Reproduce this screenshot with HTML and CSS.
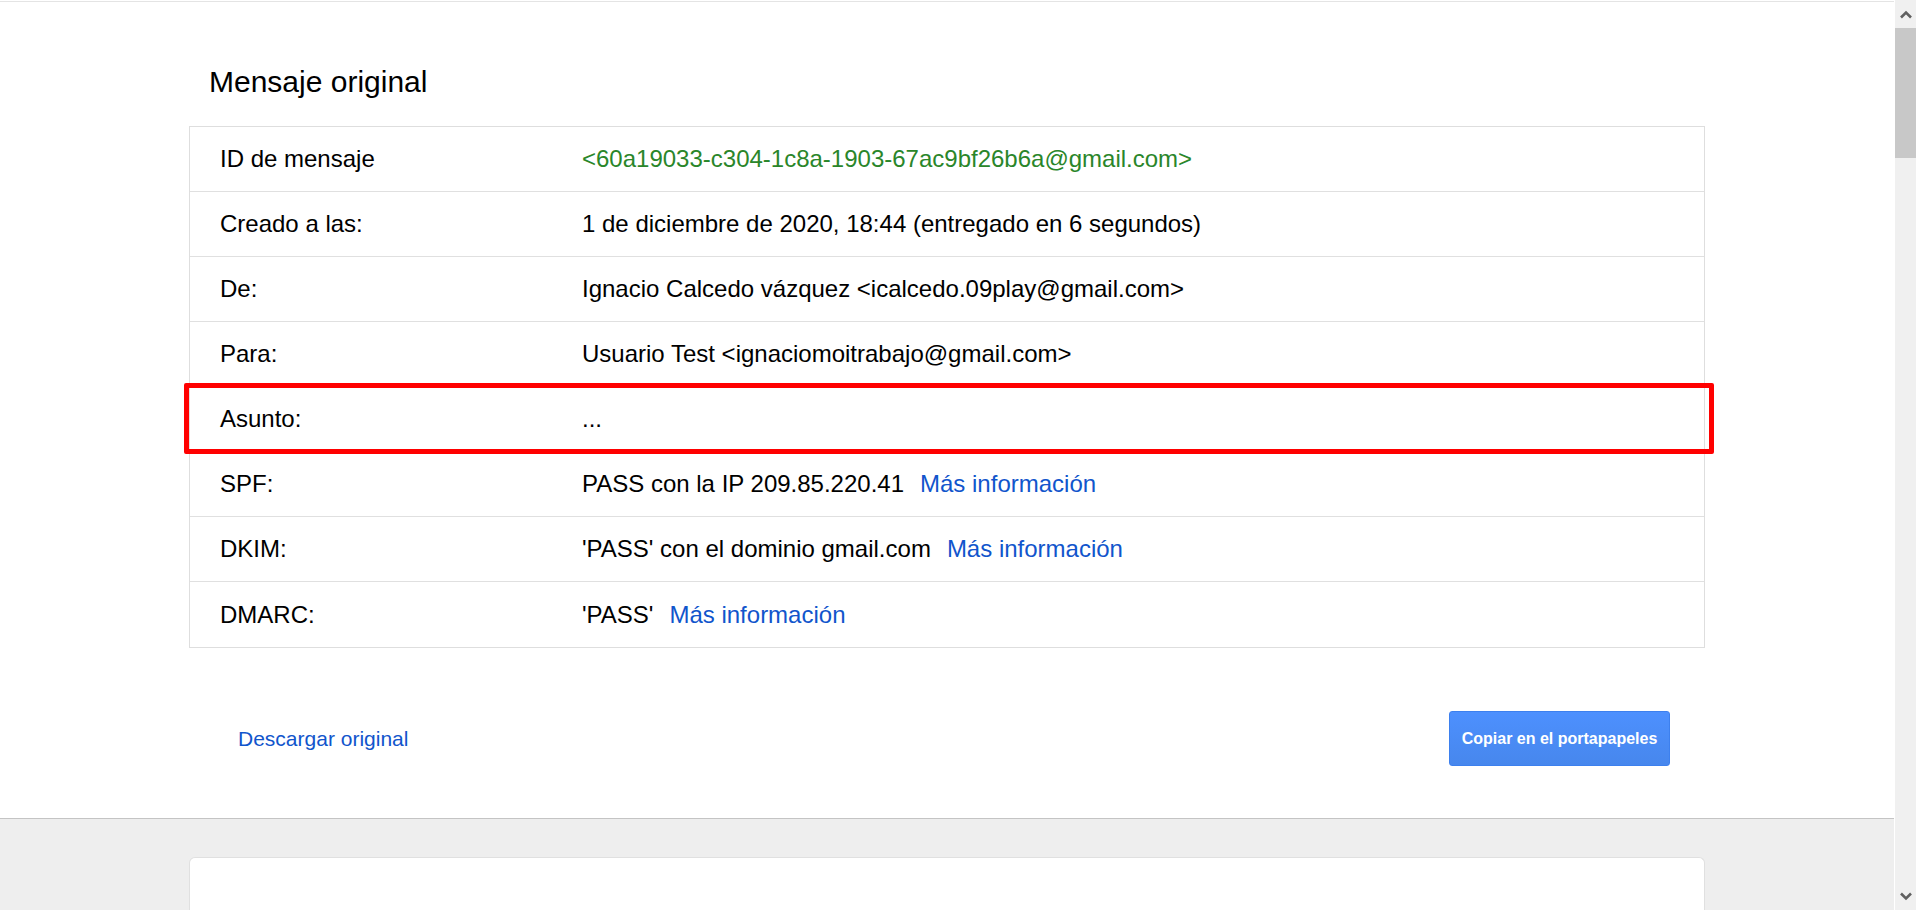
FILE: index.html
```html
<!DOCTYPE html>
<html lang="es">
<head>
<meta charset="utf-8">
<title>Mensaje original</title>
<link rel="stylesheet" href="styles.css">
</head>
<body>
<div class="page">
  <main class="content">
    <section class="top-section">
      <div class="container">
        <h1 class="title">Mensaje original</h1>
        <div class="table">
          <div class="row"><div class="label">ID de mensaje</div><div class="value msgid">&lt;60a19033-c304-1c8a-1903-67ac9bf26b6a@gmail.com&gt;</div></div>
          <div class="row"><div class="label">Creado a las:</div><div class="value">1 de diciembre de 2020, 18:44 (entregado en 6 segundos)</div></div>
          <div class="row"><div class="label">De:</div><div class="value">Ignacio Calcedo vázquez &lt;icalcedo.09play@gmail.com&gt;</div></div>
          <div class="row"><div class="label">Para:</div><div class="value">Usuario Test &lt;ignaciomoitrabajo@gmail.com&gt;</div></div>
          <div class="row highlighted"><div class="label">Asunto:</div><div class="value">...</div><div class="highlight-box"></div></div>
          <div class="row"><div class="label">SPF:</div><div class="value">PASS con la IP 209.85.220.41<a class="more" href="#">Más información</a></div></div>
          <div class="row"><div class="label">DKIM:</div><div class="value">'PASS' con el dominio gmail.com<a class="more" href="#">Más información</a></div></div>
          <div class="row"><div class="label">DMARC:</div><div class="value">'PASS'<a class="more" href="#">Más información</a></div></div>
        </div>
        <div class="actions">
          <a class="download" href="#">Descargar original</a>
          <button class="copy-btn" type="button">Copiar en el portapapeles</button>
        </div>
      </div>
    </section>
    <section class="bottom-section">
      <div class="container bottom-container">
        <div class="card"></div>
      </div>
    </section>
  </main>
  <div class="scrollbar">
    <div class="sb-btn">
      <svg width="12" height="9" viewBox="0 0 12 9"><polyline points="1,7.5 6,2.5 11,7.5" fill="none" stroke="#606060" stroke-width="2.6"/></svg>
    </div>
    <div class="sb-thumb"></div>
    <div class="sb-track"></div>
    <div class="sb-btn">
      <svg width="12" height="9" viewBox="0 0 12 9"><polyline points="1,1.5 6,6.5 11,1.5" fill="none" stroke="#606060" stroke-width="2.6"/></svg>
    </div>
  </div>
</div>
</body>
</html>
```

FILE: styles.css
```css
html, body {
  margin: 0;
  padding: 0;
  height: 100%;
  overflow: hidden;
}

body {
  font-family: "Liberation Sans", Arial, sans-serif;
  color: #222;
  background: #fff;
}

.page {
  display: flex;
  height: 910px;
  overflow: hidden;
}

.content {
  flex: 1;
  display: flex;
  flex-direction: column;
  min-width: 0;
  overflow: hidden;
}

.top-section {
  margin-top: 1px;
  border-top: 1px solid #e4e4e4;
  background: #fff;
  padding: 62px 0 52px;
}

.container {
  width: 1516px;
  margin: 0 auto;
}

.title {
  margin: 0 0 26px 20px;
  font-size: 30px;
  font-weight: normal;
  line-height: 36px;
  color: #000;
}

.table {
  border: 1px solid #dedede;
  background: #fff;
}

.row {
  position: relative;
  display: grid;
  grid-template-columns: 362px 1fr;
  align-items: center;
  height: 64px;
  padding-left: 30px;
  border-bottom: 1px solid #e0e0e0;
  font-size: 24px;
  color: #000;
}

.row:last-child {
  border-bottom: none;
  height: 65px;
}

.value {
  white-space: nowrap;
}

.msgid {
  color: #2a862a;
}

.more {
  margin-left: 16px;
  color: #1155cc;
  text-decoration: none;
}

.highlight-box {
  position: absolute;
  top: -4px;
  bottom: -3px;
  left: -6px;
  right: -10px;
  border: 5px solid #ff0000;
  border-radius: 2px;
  pointer-events: none;
}

.actions {
  display: flex;
  align-items: center;
  justify-content: space-between;
  margin-top: 63px;
  padding: 0 35px 0 49px;
}

.download {
  font-size: 21px;
  color: #1155cc;
  text-decoration: none;
}

.copy-btn {
  height: 55px;
  width: 221px;
  padding: 0;
  font-family: "Liberation Sans", Arial, sans-serif;
  font-size: 16px;
  font-weight: bold;
  color: #fff;
  background: linear-gradient(#4d90fe, #4787ed);
  border: 1px solid #3d80ee;
  border-radius: 3px;
}

.bottom-section {
  flex: 1;
  min-height: 0;
  display: flex;
  flex-direction: column;
  border-top: 1px solid #c4c4c4;
  background: #eeeeee;
  padding-top: 38px;
}

.bottom-container {
  flex: 1;
  display: flex;
  flex-direction: column;
}

.card {
  flex: 1;
  background: #fff;
  border: 1px solid #e0e0e0;
  border-bottom: none;
  border-radius: 6px 6px 0 0;
}

.scrollbar {
  width: 21px;
  border-left: 1px solid #fff;
  background: #f0f0f0;
  display: flex;
  flex-direction: column;
}

.sb-btn {
  height: 28px;
  display: flex;
  align-items: center;
  justify-content: center;
}

.sb-thumb {
  height: 130px;
  background: #c8c8c8;
}

.sb-track {
  flex: 1;
}
```
